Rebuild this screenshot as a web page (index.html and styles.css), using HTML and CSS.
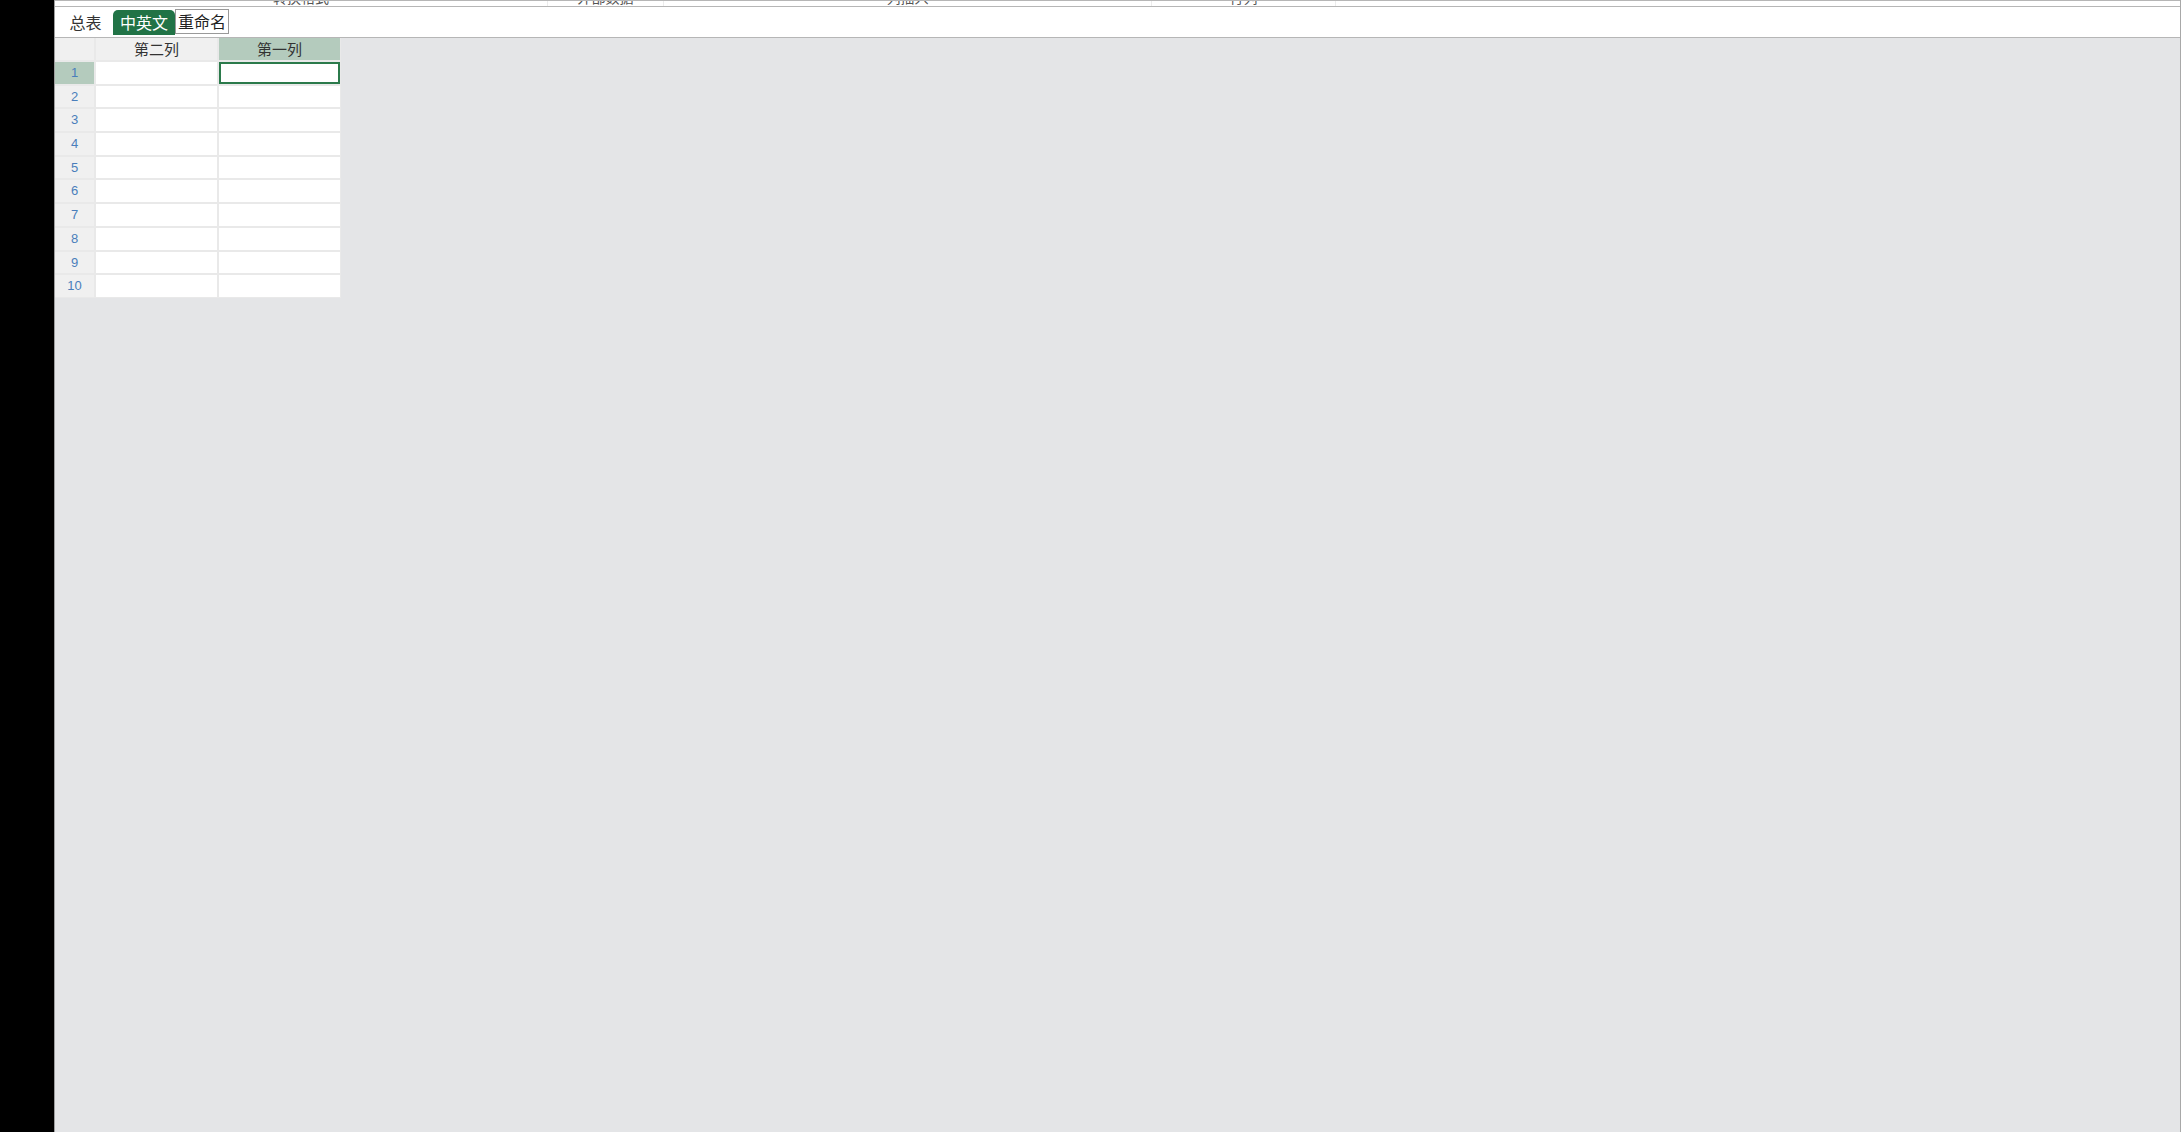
FILE: index.html
```html
<!DOCTYPE html>
<html lang="zh-CN">
<head>
<meta charset="utf-8">
<title>Sheet</title>
<link rel="stylesheet" href="styles.css">
</head>
<body>
<div class="side"></div>
<div class="main">
  <div class="topstrip">
    <div class="th">转换格式</div>
    <div class="th">外部数据</div>
    <div class="th">列插入</div>
    <div class="th">行列</div>
    <div class="th last"></div>
  </div>
  <div class="tabbar">
    <div class="tab">总表</div>
    <div class="tab active">中英文</div>
    <div class="rename">重命名</div>
  </div>
  <div class="sheet">
    <div class="corner"></div>
    <div class="ch">第二列</div>
    <div class="ch sel">第一列</div>

    <div class="rh sel">1</div><div class="c"></div><div class="c cur"></div>
    <div class="rh">2</div><div class="c"></div><div class="c"></div>
    <div class="rh">3</div><div class="c"></div><div class="c"></div>
    <div class="rh">4</div><div class="c"></div><div class="c"></div>
    <div class="rh">5</div><div class="c"></div><div class="c"></div>
    <div class="rh">6</div><div class="c"></div><div class="c"></div>
    <div class="rh">7</div><div class="c"></div><div class="c"></div>
    <div class="rh">8</div><div class="c"></div><div class="c"></div>
    <div class="rh">9</div><div class="c"></div><div class="c"></div>
    <div class="rh">10</div><div class="c"></div><div class="c"></div>
  </div>
</div>
</body>
</html>
```

FILE: styles.css
```css
html, body {
  margin: 0;
  padding: 0;
}
body {
  width: 2181px;
  height: 1132px;
  overflow: hidden;
  display: flex;
  font-family: "Noto Sans CJK SC", "Noto Sans", sans-serif;
}
.side {
  width: 54px;
  flex: none;
  background: #000;
}
.main {
  flex: 1;
  min-width: 0;
  display: flex;
  flex-direction: column;
  background: #e4e5e7;
  border-left: 1px solid #9e9e9e;
  border-right: 1px solid #a8a8a8;
}
.topstrip {
  height: 5px;
  flex: none;
  background: #fff;
  border-top: 1px solid #b6b6b6;
  border-bottom: 1px solid #b6b6b6;
  overflow: hidden;
  display: grid;
  grid-template-columns: 493px 116px 488px 184px 1fr;
}
.th {
  font-size: 14px;
  line-height: 16px;
  margin-top: -12px;
  text-align: center;
  color: #555;
  border-right: 1px solid #ececec;
}
.th.last {
  border-right: none;
}
.tabbar {
  flex: none;
  height: 31px;
  box-sizing: border-box;
  background: #fff;
  border-bottom: 1px solid #b6b6b6;
  display: flex;
  align-items: flex-start;
  padding: 3px 0 0 3px;
}
.tab {
  width: 55px;
  height: 25px;
  line-height: 25px;
  text-align: center;
  font-size: 16px;
  color: #333;
}
.tab.active {
  width: 62px;
  background: #217346;
  color: #fff;
  border-radius: 5px 5px 0 0;
}
.rename {
  margin-top: -1px;
  width: 54px;
  height: 25px;
  box-sizing: border-box;
  border: 1px solid #999;
  background: #fff;
  font-size: 16px;
  line-height: 23px;
  padding: 0 2px;
  color: #222;
  white-space: nowrap;
}
.sheet {
  align-self: flex-start;
  display: grid;
  grid-template-columns: 39px 121px 121px;
  grid-template-rows: 22px;
  grid-auto-rows: 21.7px;
  gap: 2px;
  padding: 0 1px 1px 0;
  background: #e9e9e9;
}
.corner {
  background: #f0f0f0;
}
.ch {
  background: #f0f0f0;
  font-size: 15px;
  line-height: 22px;
  text-align: center;
  color: #333;
}
.rh {
  background: #f0f0f0;
  font-family: "Liberation Sans", "DejaVu Sans", sans-serif;
  font-size: 13px;
  line-height: 22px;
  text-align: center;
  color: #4a7ebb;
}
.sel {
  background: #b4cbbd;
}
.c {
  background: #fff;
}
.cur {
  border: 2px solid #2b7a4b;
  box-sizing: border-box;
}
```
